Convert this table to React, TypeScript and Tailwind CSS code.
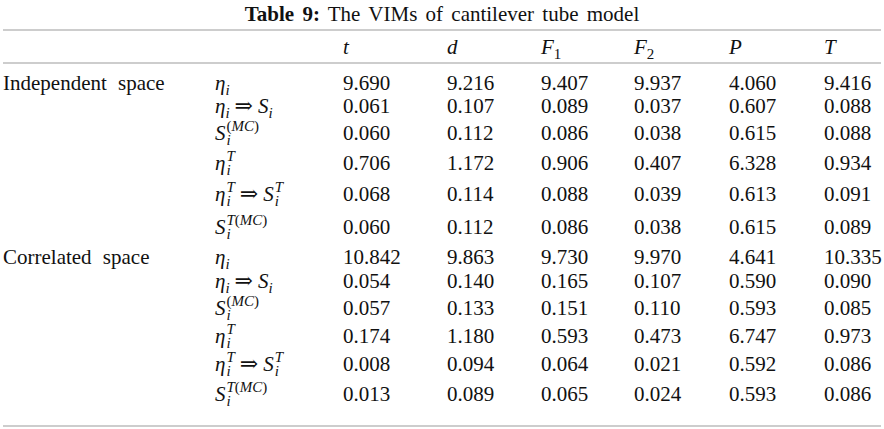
import type { ReactNode } from 'react'

const cols = 'grid grid-cols-[212px_128px_104px_94px_93px_95px_95px_1fr]'

function I({ children }: { children: ReactNode }) {
  return <span className="italic">{children}</span>
}

function Sub({ children }: { children: ReactNode }) {
  return <span className="relative top-[5px] text-[15px]">{children}</span>
}

// superscript stacked over subscript, same x
function Stack({ sup, sub }: { sup: ReactNode; sub: ReactNode }) {
  return (
    <span className="relative -top-[9px] inline-flex flex-col text-[15px] leading-[14px] ml-[1px]">
      <span>{sup}</span>
      <span>{sub}</span>
    </span>
  )
}

const Arrow = () => <span className="mx-[5px] [font-family:DejaVu_Serif,serif] text-[22px]">⇒</span>
const Eta = () => <I>η</I>

const mc = (
  <>
    (<I>MC</I>)
  </>
)

const syms: Record<string, ReactNode> = {
  eta: (
    <>
      <Eta />
      <Sub><I>i</I></Sub>
    </>
  ),
  etaS: (
    <>
      <Eta />
      <Sub><I>i</I></Sub>
      <Arrow />
      <I>S</I>
      <Sub><I>i</I></Sub>
    </>
  ),
  smc: (
    <>
      <I>S</I>
      <Stack sup={mc} sub={<I>i</I>} />
    </>
  ),
  etaT: (
    <>
      <Eta />
      <Stack sup={<I>T</I>} sub={<I>i</I>} />
    </>
  ),
  etaTS: (
    <>
      <Eta />
      <Stack sup={<I>T</I>} sub={<I>i</I>} />
      <Arrow />
      <I>S</I>
      <Stack sup={<I>T</I>} sub={<I>i</I>} />
    </>
  ),
  stmc: (
    <>
      <I>S</I>
      <Stack sup={<><I>T</I>{mc}</>} sub={<I>i</I>} />
    </>
  ),
}

interface RowData {
  h: string
  label?: string
  sym: keyof typeof syms
  vals: string[]
}

const rows: RowData[] = [
  { h: 'h-[23px]', label: 'Independent space', sym: 'eta', vals: ['9.690', '9.216', '9.407', '9.937', '4.060', '9.416'] },
  { h: 'h-[27px]', sym: 'etaS', vals: ['0.061', '0.107', '0.089', '0.037', '0.607', '0.088'] },
  { h: 'h-[30px]', sym: 'smc', vals: ['0.060', '0.112', '0.086', '0.038', '0.615', '0.088'] },
  { h: 'h-[31px]', sym: 'etaT', vals: ['0.706', '1.172', '0.906', '0.407', '6.328', '0.934'] },
  { h: 'h-[33px]', sym: 'etaTS', vals: ['0.068', '0.114', '0.088', '0.039', '0.613', '0.091'] },
  { h: 'h-[30px]', sym: 'stmc', vals: ['0.060', '0.112', '0.086', '0.038', '0.615', '0.089'] },
  { h: 'h-[24px]', label: 'Correlated space', sym: 'eta', vals: ['10.842', '9.863', '9.730', '9.970', '4.641', '10.335'] },
  { h: 'h-[27px]', sym: 'etaS', vals: ['0.054', '0.140', '0.165', '0.107', '0.590', '0.090'] },
  { h: 'h-[28px]', sym: 'smc', vals: ['0.057', '0.133', '0.151', '0.110', '0.593', '0.085'] },
  { h: 'h-[28px]', sym: 'etaT', vals: ['0.174', '1.180', '0.593', '0.473', '6.747', '0.973'] },
  { h: 'h-[30px]', sym: 'etaTS', vals: ['0.008', '0.094', '0.064', '0.021', '0.592', '0.086'] },
  { h: 'h-[41px]', sym: 'stmc', vals: ['0.013', '0.089', '0.065', '0.024', '0.593', '0.086'] },
]

function Rule() {
  return <div className="h-[2px] bg-[#cdcdcd]" />
}

export default function App() {
  return (
    <div className="w-[884px] h-[429px] bg-white text-[#111] [font-family:Liberation_Serif,serif] text-[21px] leading-[20px] overflow-hidden">
      <div className="pt-[4px] h-[29px] text-center [word-spacing:3px]">
        <span className="font-bold">Table 9:</span> The VIMs of cantilever tube model
      </div>
      <div className="mx-[3px]">
        <Rule />
        <div className={`${cols} pt-[6px] h-[31px]`}>
          <div />
          <div />
          <div><I>t</I></div>
          <div><I>d</I></div>
          <div><I>F</I><Sub>1</Sub></div>
          <div><I>F</I><Sub>2</Sub></div>
          <div><I>P</I></div>
          <div><I>T</I></div>
        </div>
        <Rule />
        <div className="pt-[9px]">
          {rows.map((r, i) => (
            <div key={i} className={`${cols} ${r.h}`}>
              <div className="[word-spacing:6px] whitespace-nowrap">{r.label}</div>
              <div className="whitespace-nowrap">{syms[r.sym]}</div>
              {r.vals.map((v, j) => (
                <div key={j}>{v}</div>
              ))}
            </div>
          ))}
        </div>
        <Rule />
      </div>
    </div>
  )
}
